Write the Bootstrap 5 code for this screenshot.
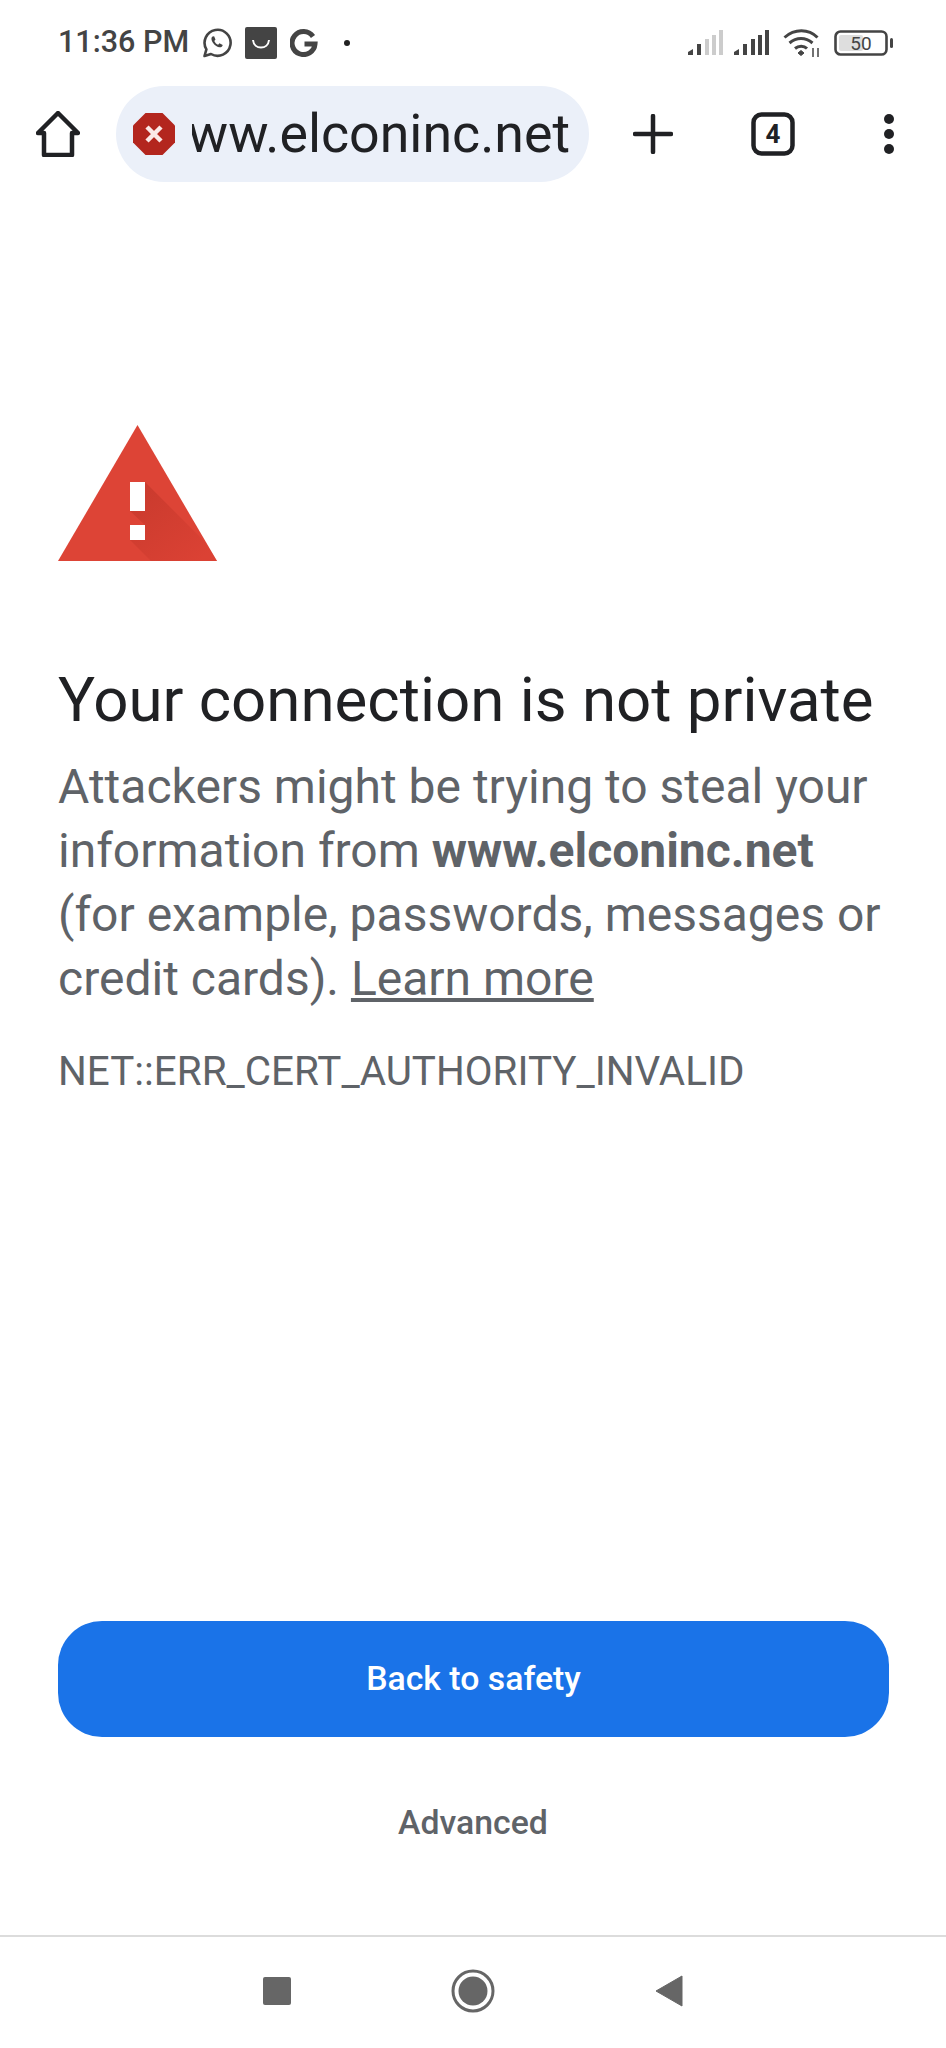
<!DOCTYPE html>
<html lang="en">
<head>
    <meta charset="UTF-8">
    <meta name="viewport" content="width=device-width, initial-scale=1.0">
    <title>Privacy error</title>
    <link href="https://cdn.jsdelivr.net/npm/bootstrap@5.3.0/dist/css/bootstrap.min.css" rel="stylesheet">
    <style>
        body {
            font-family: Roboto, "Liberation Sans", sans-serif;
            background: #fff;
            color: #202124;
        }
        .phone-screen { height: 2048px; width: 946px; overflow: hidden; }
        .status-strip { height: 85px; padding: 0 52px 0 58px; }
        .status-time { font-size: 30.5px; font-weight: 500; color: #444; line-height: 1; }
        .status-left { gap: 13px; }
        .status-right { gap: 13px; }
        .signal-weak { margin-right: -3px; }
        .status-dot { width: 6px; height: 6px; border-radius: 50%; background: #222; margin-left: 13px; }
        .tool-strip { height: 98px; padding: 0 0 0 36px; }
        .url-pill { width: 473px; height: 96px; margin-left: 36px; background: #ebf0f9; border-radius: 48px; padding: 0 19px 0 17px; }
        .url-clip { width: 378px; margin-left: 17px; overflow: hidden; justify-content: flex-end; }
        .url-text { font-size: 53.7px; line-height: 64px; color: #202124; white-space: nowrap; }
        .tool-plus { margin-left: 44px; }
        .tool-tabs { margin-left: 78px; }
        .tool-more { margin-left: 88px; }
        .warn-body { padding: 242px 58px 0; flex: 1 1 auto; }
        .warn-title { font-size: 61.8px; font-weight: 400; line-height: 76px; margin: 101px 0 0; white-space: nowrap; }
        .warn-text { font-size: 48px; line-height: 64px; color: #5f6368; margin: 17px 0 0; }
        .warn-text b { font-weight: 700; }
        .warn-text a { color: #5f6368; text-decoration: underline; }
        .warn-code { font-size: 40.4px; line-height: 48px; color: #5f6368; margin: 37px 0 0; white-space: nowrap; }
        .safety-btn { height: 116px; width: 831px; border-radius: 44px; background: #1a73e8; border: 0; color: #fff; font-size: 33.8px; font-weight: 500; margin-left: 58px; }
        .safety-btn:hover { background: #1a73e8; color: #fff; }
        .advanced-btn { font-size: 33.8px; font-weight: 500; color: #5f6368; line-height: 44px; margin-top: 64px; text-align: center; }
        .nav-strip { height: 113px; margin-top: 90px; border-top: 2px solid #dcdcdc; padding-bottom: 3px; }
        .nav-slot { width: 196px; }
    </style>
</head>
<body>
<div class="phone-screen d-flex flex-column">
    <!-- status bar -->
    <div class="status-strip d-flex align-items-center justify-content-between">
        <div class="status-left d-flex align-items-center">
            <span class="status-time">11:36 PM</span>
            <svg width="30" height="30" viewBox="0 0 30 30" fill="none" stroke="#444" stroke-width="2.6" stroke-linejoin="round">
                <path d="M2.500 28l1.900-6.600A13 13 0 1 1 9 26z"/>
                <path d="M10.500 8.500c-1.600 1.200-1.400 3.600.4 6.200 2 2.800 4.600 4.600 6.800 4.600 1.600 0 2.800-1 3-2.400l-3.200-1.600-1.400 1.400c-1.400-.5-3-2-3.800-3.800l1.200-1.400-1.400-3.200z" fill="#444" stroke="none"/>
            </svg>
            <svg width="32" height="32" viewBox="0 0 32 32">
                <rect width="32" height="32" rx="2" fill="#444"/>
                <path d="M8 13c1 10 15 10 16 0" fill="none" stroke="#fff" stroke-width="2"/>
            </svg>
            <svg width="28" height="28" viewBox="0 0 28 28" fill="none" stroke="#444" stroke-width="5">
                <path d="M23 7.500A11.500 11.500 0 1 0 25 15H14.500"/>
            </svg>
            <span class="status-dot"></span>
        </div>
        <div class="status-right d-flex align-items-center">
            <svg class="signal-weak" width="36" height="26" viewBox="0 0 36 26">
                <path d="M0 25v-3l5-3v6z" fill="#444"/><rect x="9" y="14" width="4" height="11" fill="#444"/>
                <rect x="17" y="9" width="4" height="16" fill="#ccc"/><rect x="24" y="5" width="4" height="20" fill="#ccc"/><rect x="31" y="0" width="4" height="25" fill="#ccc"/>
            </svg>
            <svg width="36" height="26" viewBox="0 0 36 26" fill="#444">
                <path d="M0 25v-3l5-3v6z"/><rect x="9" y="14" width="4" height="11"/>
                <rect x="17" y="9" width="4" height="16"/><rect x="24" y="5" width="4" height="20"/><rect x="31" y="0" width="4" height="25"/>
            </svg>
            <svg width="38" height="30" viewBox="0 0 38 30" fill="none" stroke="#444" stroke-width="3">
                <path d="M1.500 9.500c10-9 24-9 33 0"/>
                <path d="M6.500 15c7-6 16-6 23 0"/>
                <path d="M12 20.500c3.500-3 9-3 12 0"/>
                <path d="M15 25l3-2.500 3 2.500-3 2.500z" fill="#444" stroke-width="1"/>
                <path d="M30 20v9M35 20v9" stroke-width="1.500"/>
            </svg>
            <svg width="60" height="26" viewBox="0 0 60 26">
                <rect x="1.500" y="1.500" width="51" height="23" rx="5" fill="none" stroke="#444" stroke-width="2.6"/>
                <rect x="5" y="5" width="24" height="16" rx="2" fill="#dedede"/>
                <rect x="56" y="8" width="3" height="10" rx="1.500" fill="#444"/>
                <text x="27" y="20" text-anchor="middle" font-family="Roboto, sans-serif" font-size="19" fill="#444">50</text>
            </svg>
        </div>
    </div>

    <!-- browser toolbar -->
    <div class="tool-strip d-flex align-items-center">
        <svg width="44" height="46" viewBox="0 0 44 46" fill="none" stroke="#202124" stroke-width="4.500" stroke-linejoin="round" stroke-linecap="round">
            <path d="M2 22L22 2l20 20h-6v22H8V22z"/>
        </svg>
        <div class="url-pill d-flex align-items-center">
            <svg class="flex-shrink-0" width="42" height="42" viewBox="0 0 42 42">
                <path d="M12.500 0h17L42 12.500v17L29.500 42h-17L0 29.500v-17z" fill="#b3261e"/>
                <path d="M14 14l14 14M28 14L14 28" stroke="#fbe9e7" stroke-width="4.500"/>
            </svg>
            <div class="url-clip d-flex"><span class="url-text">www.elconinc.net</span></div>
        </div>
        <svg class="tool-plus" width="40" height="40" viewBox="0 0 40 40" stroke="#202124" stroke-width="4.500" stroke-linecap="round">
            <path d="M20 2v36M2 20h36"/>
        </svg>
        <svg class="tool-tabs" width="44" height="44" viewBox="0 0 44 44">
            <rect x="2.500" y="2.500" width="39" height="39" rx="8" fill="none" stroke="#202124" stroke-width="4.500"/>
            <text x="22" y="31" text-anchor="middle" font-family="Roboto, sans-serif" font-size="26" font-weight="700" fill="#202124">4</text>
        </svg>
        <svg class="tool-more" width="12" height="40" viewBox="0 0 12 40" fill="#202124">
            <circle cx="6" cy="5" r="5"/><circle cx="6" cy="20" r="5"/><circle cx="6" cy="35" r="5"/>
        </svg>
    </div>

    <!-- interstitial -->
    <div class="warn-body">
        <svg class="d-block" width="159" height="136" viewBox="0 0 159 136">
            <defs>
                <linearGradient id="warnShade" x1="0.2" y1="0.1" x2="0.9" y2="0.9">
                    <stop offset="0" stop-color="#b93226"/>
                    <stop offset="1" stop-color="#d93f32"/>
                </linearGradient>
            </defs>
            <path d="M79.500 0L159 136H0z" fill="#dd4436"/>
            <path d="M87 57l60 60 12 19H93l-21-21h15v-15L72 86h15z" fill="url(#warnShade)" opacity=".5"/>
            <rect x="72" y="57" width="15" height="29" fill="#fff"/>
            <rect x="72" y="100" width="15" height="15" fill="#fff"/>
        </svg>
        <h1 class="warn-title">Your connection is not private</h1>
        <p class="warn-text">Attackers might be trying to steal your information from <b>www.elconinc.net</b> (for example, passwords, messages or credit cards). <a href="#">Learn more</a></p>
        <p class="warn-code">NET::ERR_CERT_AUTHORITY_INVALID</p>
    </div>

    <button type="button" class="btn safety-btn">Back to safety</button>
    <div class="advanced-btn">Advanced</div>

    <!-- nav bar -->
    <div class="nav-strip d-flex align-items-center justify-content-center">
        <div class="nav-slot d-flex justify-content-center">
            <svg width="28" height="28" viewBox="0 0 28 28"><rect width="28" height="28" rx="2" fill="#666"/></svg>
        </div>
        <div class="nav-slot d-flex justify-content-center">
            <svg width="44" height="44" viewBox="0 0 44 44"><circle cx="22" cy="22" r="20" fill="none" stroke="#666" stroke-width="3"/><circle cx="22" cy="22" r="14.500" fill="#666"/></svg>
        </div>
        <div class="nav-slot d-flex justify-content-center">
            <svg width="28" height="32" viewBox="0 0 28 32"><path d="M27 1v30L1 16z" fill="#666" stroke="#666" stroke-linejoin="round"/></svg>
        </div>
    </div>
</div>
<script src="https://cdn.jsdelivr.net/npm/bootstrap@5.3.0/dist/js/bootstrap.bundle.min.js"></script>
</body>
</html>
